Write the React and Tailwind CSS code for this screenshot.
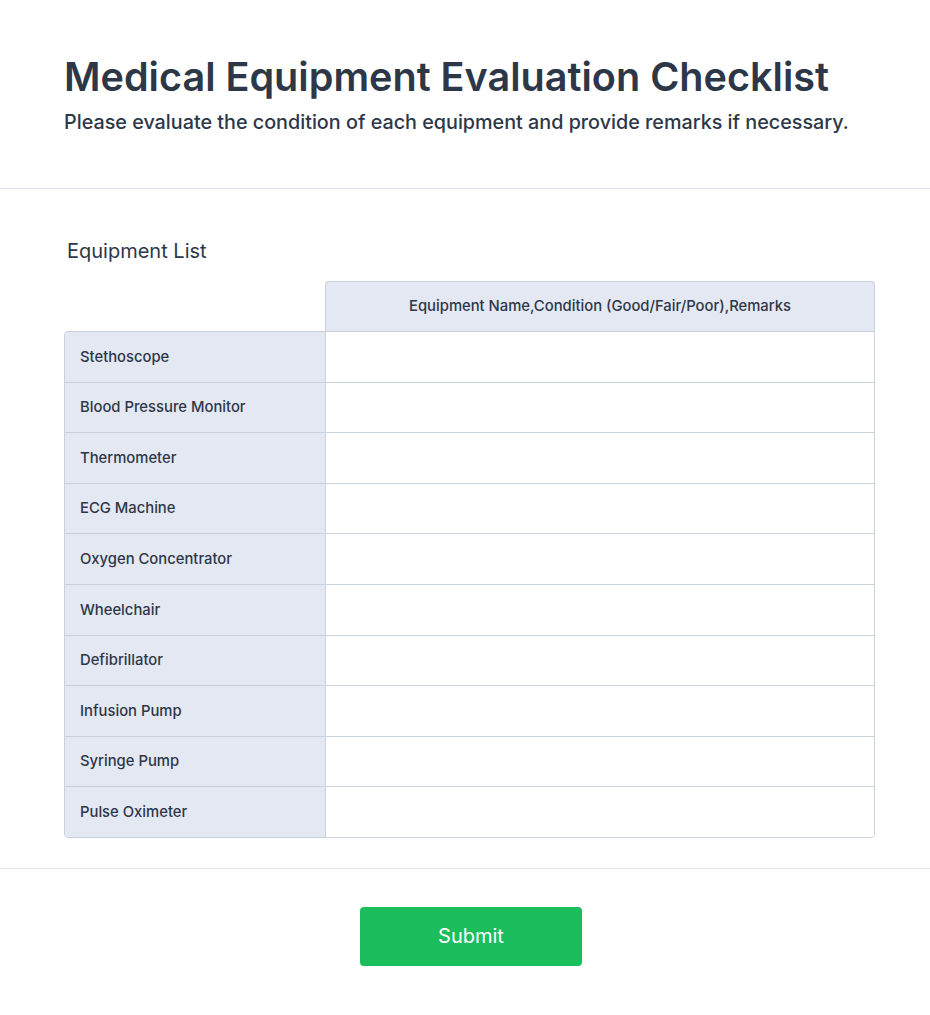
import React from 'react';

const items = [
  'Stethoscope',
  'Blood Pressure Monitor',
  'Thermometer',
  'ECG Machine',
  'Oxygen Concentrator',
  'Wheelchair',
  'Defibrillator',
  'Infusion Pump',
  'Syringe Pump',
  'Pulse Oximeter',
];

export default function App() {
  return (
    <div className="min-h-[1015px] bg-white text-[#2d3748]" style={{ fontFamily: 'Inter, "Noto Sans", sans-serif' }}>
      <header className="px-16 pt-[53px] pb-[53px] border-b border-[#dde1ec]">
        <h1 className="text-[39.6px] leading-[48px] font-semibold">Medical Equipment Evaluation Checklist</h1>
        <p className="mt-[8px] text-[19.75px] leading-[26px] font-medium">Please evaluate the condition of each equipment and provide remarks if necessary.</p>
      </header>

      <section className="px-16 pt-[49px] pb-[30px] border-b border-[#e3e6ee]">
        <h2 className="pl-[3px] text-[20px] leading-[26px] font-normal mb-[17px]">Equipment List</h2>

        <div className="w-[811px]">
          <div className="flex">
            <div className="w-[261px]" />
            <div className="flex-1 h-[50px] flex items-center justify-center bg-[#e4e8f3] border border-b-0 border-[#c9d0de] rounded-t-[4px] text-[14.8px] font-medium">
              Equipment Name,Condition (Good/Fair/Poor),Remarks
            </div>
          </div>
          <div className="border border-[#c9d0de] rounded-b-[4px] rounded-tl-[4px] overflow-hidden">
            {items.map((name, i) => (
              <div key={name} className={`flex ${i > 0 ? 'h-[50.6px] border-t border-[#c9d0de]' : 'h-[49.6px]'}`}>
                <div className="w-[261px] bg-[#e4e8f3] border-r border-[#c9d0de] flex items-center pl-[15px] text-[14.8px] font-medium">
                  {name}
                </div>
                <div className="flex-1 bg-white" />
              </div>
            ))}
          </div>
        </div>
      </section>

      <div className="flex justify-center pt-[38px] pl-[12px]">
        <button className="w-[222px] h-[59px] rounded-[4px] bg-[#1bbd5d] text-white text-[20px] font-normal">Submit</button>
      </div>
    </div>
  );
}
